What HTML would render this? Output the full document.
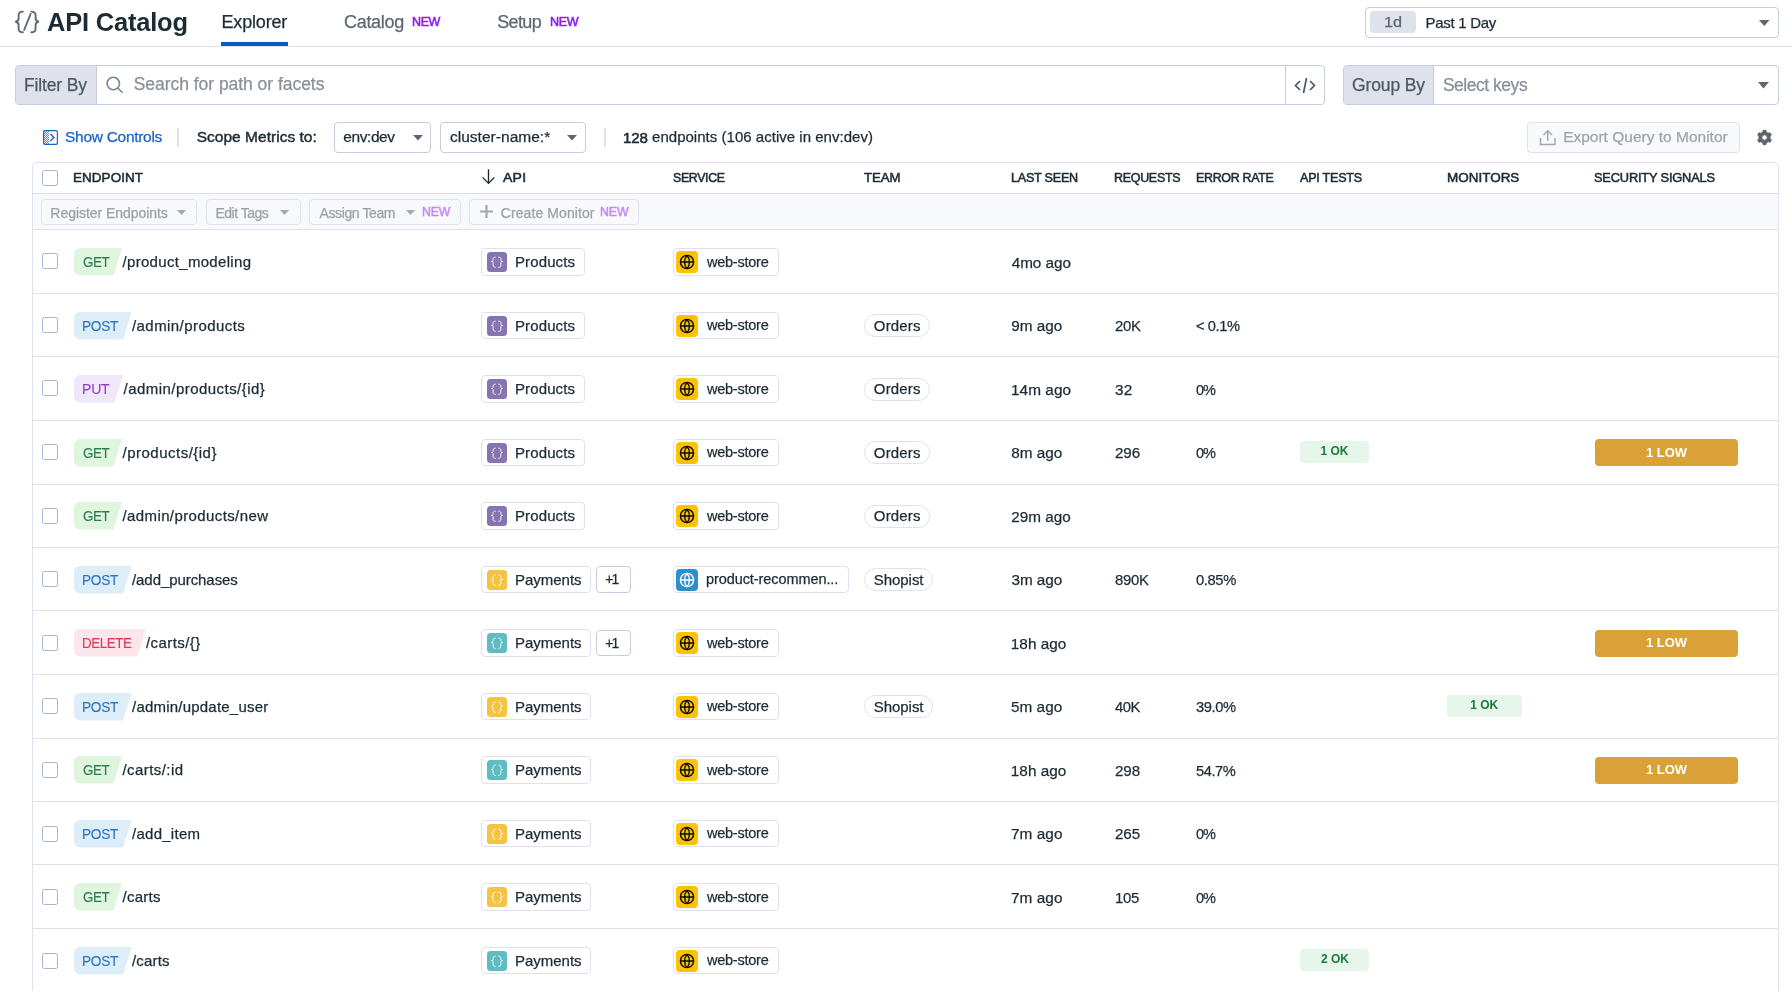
<!DOCTYPE html>
<html><head><meta charset="utf-8"><title>API Catalog</title>
<style>
html,body{margin:0;padding:0;background:#fff;width:1792px;height:991px;overflow:hidden}
body{position:relative;font-family:"Liberation Sans",sans-serif}
.t{position:absolute;line-height:0;white-space:nowrap;-webkit-text-stroke-width:0.25px}
.b{position:absolute;box-sizing:border-box}
svg.b{overflow:visible}
</style></head><body><div style="position:absolute;left:0;top:0;width:1792px;height:991px;will-change:transform;background:#fff">
<svg class="b" style="left:14.00px;top:10.00px" width="26" height="24" viewBox="0 0 26 24"><g fill="none" stroke="#5e6a74" stroke-width="1.9" stroke-linecap="round"><path d="M8.9 1.6 C5.6 1.6 4.6 2.6 4.6 5.3 V8.6 C4.6 10.6 3.6 11.6 1.2 11.8 C3.6 12 4.6 13 4.6 15 V18.4 C4.6 21.1 5.6 22.2 8.9 22.2"/><path d="M17.3 1.6 C20.6 1.6 21.6 2.6 21.6 5.3 V8.6 C21.6 10.6 22.6 11.6 25 11.8 C22.6 12 21.6 13 21.6 15 V18.4 C21.6 21.1 20.6 22.2 17.3 22.2"/><path d="M16.6 4 L10.2 19.8"/></g></svg>
<div class="t" style="left:46.77px;top:22.19px;font-size:26.00px;color:#1c2b34;font-weight:700;-webkit-text-stroke-width:0;letter-spacing:-0.201px;transform:scaleX(0.9794);transform-origin:0 0">API Catalog</div>
<div class="t" style="left:221.52px;top:22.36px;font-size:18.00px;color:#1c2b34;letter-spacing:-0.179px">Explorer</div>
<div class="b" style="left:221.00px;top:42.00px;width:67.00px;height:4.00px;background:#0a5bc4"></div>
<div class="t" style="left:344.09px;top:22.36px;font-size:18.00px;color:#5d6771;letter-spacing:-0.328px">Catalog</div>
<div class="t" style="left:412.18px;top:21.80px;font-size:13.00px;color:#8a1df5;letter-spacing:-0.399px;transform:scaleX(0.9606);transform-origin:0 0;-webkit-text-stroke:0.6px #8a1df5">NEW</div>
<div class="t" style="left:497.18px;top:22.36px;font-size:18.00px;color:#5d6771;letter-spacing:-0.616px">Setup</div>
<div class="t" style="left:550.17px;top:21.80px;font-size:13.00px;color:#8a1df5;letter-spacing:-0.335px;transform:scaleX(0.9668);transform-origin:0 0;-webkit-text-stroke:0.6px #8a1df5">NEW</div>
<div class="b" style="left:0.00px;top:46.00px;width:1792.00px;height:1.00px;background:#dfe2ec"></div>
<div class="b" style="left:1365.00px;top:7.00px;width:414.00px;height:31.00px;background:#fff;border:1px solid #c6cbdd;border-radius:4px;box-sizing:border-box"></div>
<div class="b" style="left:1370.00px;top:11.00px;width:46.00px;height:22.00px;background:#dfe2ec;border-radius:4px"></div>
<div class="t" style="left:1384.46px;top:21.80px;font-size:15.30px;color:#5a6470;transform:scaleX(1.0628);transform-origin:0 0">1d</div>
<div class="t" style="left:1425.47px;top:22.70px;font-size:15.00px;color:#1c2b34;letter-spacing:-0.290px">Past 1 Day</div>
<svg class="b" style="left:1759.05px;top:20.00px" width="10.5" height="6" viewBox="0 0 10.5 6"><path d="M0 0H10.5 L5.25 6Z" fill="#5f666d"/></svg>
<div class="b" style="left:15.00px;top:65.00px;width:1310.00px;height:40.00px;background:#fff;border:1px solid #c6cbdd;border-radius:4px;box-sizing:border-box"></div>
<div class="b" style="left:16.00px;top:66.00px;width:80.00px;height:38.00px;background:#dfe2ec;border-radius:3px 0 0 3px"></div>
<div class="b" style="left:96.00px;top:66.00px;width:1.00px;height:38.00px;background:#c6cbdd"></div>
<div class="t" style="left:23.96px;top:84.94px;font-size:17.50px;color:#4d5864;letter-spacing:-0.138px">Filter By</div>
<svg class="b" style="left:106.00px;top:76.00px" width="18" height="18" viewBox="0 0 18 18"><g fill="none" stroke="#7c858d" stroke-width="1.6"><circle cx="7.3" cy="7.5" r="6.2"/><path d="M11.8 12 L16.6 16.8"/></g></svg>
<div class="t" style="left:133.71px;top:84.44px;font-size:17.50px;color:#899098;letter-spacing:-0.038px">Search for path or facets</div>
<div class="b" style="left:1285.00px;top:66.00px;width:1.00px;height:38.00px;background:#c6cbdd"></div>
<svg class="b" style="left:1294.00px;top:77.00px" width="22" height="17" viewBox="0 0 22 17"><g fill="none" stroke="#4d5864" stroke-width="1.7"><path d="M6 4 L1.5 8.5 L6 13"/><path d="M16 4 L20.5 8.5 L16 13"/><path d="M12.5 1 L9.5 16"/></g></svg>
<div class="b" style="left:1343.00px;top:65.00px;width:436.00px;height:40.00px;background:#fff;border:1px solid #c6cbdd;border-radius:4px;box-sizing:border-box"></div>
<div class="b" style="left:1344.00px;top:66.00px;width:89.00px;height:38.00px;background:#dfe2ec;border-radius:3px 0 0 3px"></div>
<div class="b" style="left:1433.00px;top:66.00px;width:1.00px;height:38.00px;background:#c6cbdd"></div>
<div class="t" style="left:1352.12px;top:84.94px;font-size:17.50px;color:#4d5864;letter-spacing:-0.144px">Group By</div>
<div class="t" style="left:1442.91px;top:85.04px;font-size:17.50px;color:#899098;letter-spacing:-0.476px">Select keys</div>
<svg class="b" style="left:1758.20px;top:82.20px" width="11" height="6.5" viewBox="0 0 11 6.5"><path d="M0 0H11 L5.5 6.5Z" fill="#5f666d"/></svg>
<svg class="b" style="left:43.00px;top:130.00px" width="15" height="15" viewBox="0 0 15 15"><g fill="#1a63c6" opacity="0.75"><rect x="1" y="1" width="1" height="1"/><rect x="3" y="1" width="1" height="1"/><rect x="5" y="1" width="1" height="1"/><rect x="2" y="2" width="1" height="1"/><rect x="4" y="2" width="1" height="1"/><rect x="1" y="3" width="1" height="1"/><rect x="3" y="3" width="1" height="1"/><rect x="5" y="3" width="1" height="1"/><rect x="2" y="4" width="1" height="1"/><rect x="4" y="4" width="1" height="1"/><rect x="1" y="5" width="1" height="1"/><rect x="3" y="5" width="1" height="1"/><rect x="5" y="5" width="1" height="1"/><rect x="2" y="6" width="1" height="1"/><rect x="4" y="6" width="1" height="1"/><rect x="1" y="7" width="1" height="1"/><rect x="3" y="7" width="1" height="1"/><rect x="5" y="7" width="1" height="1"/><rect x="2" y="8" width="1" height="1"/><rect x="4" y="8" width="1" height="1"/><rect x="1" y="9" width="1" height="1"/><rect x="3" y="9" width="1" height="1"/><rect x="5" y="9" width="1" height="1"/><rect x="2" y="10" width="1" height="1"/><rect x="4" y="10" width="1" height="1"/><rect x="1" y="11" width="1" height="1"/><rect x="3" y="11" width="1" height="1"/><rect x="5" y="11" width="1" height="1"/><rect x="2" y="12" width="1" height="1"/><rect x="4" y="12" width="1" height="1"/><rect x="1" y="13" width="1" height="1"/><rect x="3" y="13" width="1" height="1"/><rect x="5" y="13" width="1" height="1"/></g><rect x="0.6" y="0.6" width="13.8" height="13.8" rx="1.3" fill="none" stroke="#1a63c6" stroke-width="1.2"/><path d="M7.7 4.3 L10.9 7.5 L7.7 10.7" fill="none" stroke="#1a63c6" stroke-width="1.4" stroke-linecap="round"/></svg>
<div class="t" style="left:65.00px;top:137.03px;font-size:15.50px;color:#1a63c6;letter-spacing:-0.286px">Show Controls</div>
<div class="b" style="left:177.00px;top:128.00px;width:2.00px;height:19.00px;background:#dfe2ec"></div>
<div class="t" style="left:196.70px;top:136.93px;font-size:15.50px;color:#1c2b34;letter-spacing:0.024px;-webkit-text-stroke:0.45px #1c2b34">Scope Metrics to:</div>
<div class="b" style="left:334.00px;top:122.00px;width:97.00px;height:31.00px;background:#fff;border:1px solid #c6cbdd;border-radius:4px;box-sizing:border-box"></div>
<div class="t" style="left:343.34px;top:136.63px;font-size:15.50px;color:#1c2b34;letter-spacing:-0.429px">env:dev</div>
<svg class="b" style="left:413.00px;top:135.00px" width="10" height="5.5" viewBox="0 0 10 5.5"><path d="M0 0H10 L5 5.5Z" fill="#5f666d"/></svg>
<div class="b" style="left:440.00px;top:122.00px;width:146.00px;height:31.00px;background:#fff;border:1px solid #c6cbdd;border-radius:4px;box-sizing:border-box"></div>
<div class="t" style="left:449.94px;top:136.63px;font-size:15.50px;color:#1c2b34;letter-spacing:0.029px">cluster-name:*</div>
<svg class="b" style="left:567.00px;top:135.00px" width="10" height="5.5" viewBox="0 0 10 5.5"><path d="M0 0H10 L5 5.5Z" fill="#5f666d"/></svg>
<div class="b" style="left:604.00px;top:128.00px;width:2.00px;height:19.00px;background:#dfe2ec"></div>
<div class="t" style="left:623.15px;top:137.50px;font-size:15.30px;color:#1c2b34;letter-spacing:-0.151px;transform:scaleX(0.9874);transform-origin:0 0;-webkit-text-stroke-width:0.55px">128</div>
<div class="t" style="left:652.06px;top:137.40px;font-size:15.00px;color:#1c2b34;letter-spacing:0.023px">endpoints (106 active in env:dev)</div>
<div class="b" style="left:1527.00px;top:122.00px;width:213.00px;height:31.00px;background:#f8f9fb;border:1px solid #dfe2ec;border-radius:4px;box-sizing:border-box"></div>
<svg class="b" style="left:1539.00px;top:129.00px" width="18" height="17" viewBox="0 0 18 17"><g fill="none" stroke="#a3a9b0" stroke-width="1.5"><path d="M1.5 9 V15.5 H16 V9"/><path d="M8.75 12 V2 M4.5 6 L8.75 1.8 L13 6"/></g></svg>
<div class="t" style="left:1563.13px;top:137.13px;font-size:15.50px;color:#9ea4ab">Export Query to Monitor</div>
<svg class="b" style="left:1756.50px;top:130.20px" width="15" height="15" viewBox="0 0 15 15"><path fill="#5b636b" stroke="#5b636b" stroke-width="0.9" stroke-linejoin="round" fill-rule="evenodd" d="M5.71 2.19 L6.13 0.33 L8.87 0.33 L9.29 2.19 L11.20 3.30 L13.03 2.73 L14.39 5.10 L12.99 6.39 L12.99 8.61 L14.39 9.90 L13.03 12.27 L11.20 11.70 L9.29 12.81 L8.87 14.67 L6.13 14.67 L5.71 12.81 L3.80 11.70 L1.97 12.27 L0.61 9.90 L2.01 8.61 L2.01 6.39 L0.61 5.10 L1.97 2.73 L3.80 3.30Z M4.80 7.50 a2.70 2.70 0 1 0 5.40 0 a2.70 2.70 0 1 0 -5.40 0Z"/></svg>
<div class="b" style="left:32.00px;top:162.00px;width:1747.00px;height:938.00px;background:#fff;border:1px solid #dfe2ec;border-radius:5px 5px 0 0;box-sizing:border-box"></div>
<div class="b" style="left:33.00px;top:193.00px;width:1745.00px;height:1.00px;background:#dfe2ec"></div>
<div class="b" style="left:33.00px;top:194.00px;width:1745.00px;height:35.00px;background:#f8f9fb"></div>
<div class="b" style="left:33.00px;top:229.00px;width:1745.00px;height:1.00px;background:#dfe2ec"></div>
<div class="b" style="left:42.00px;top:170.00px;width:16.00px;height:16.00px;background:#fff;border:1px solid #a9b2cf;border-radius:2.5px;box-sizing:border-box;border-width:1.5px"></div>
<div class="t" style="left:73.29px;top:177.56px;font-size:13.40px;color:#1c2b34;letter-spacing:0.033px;transform:scaleX(1.0079);transform-origin:0 0;-webkit-text-stroke:0.55px #1c2b34">ENDPOINT</div>
<div class="t" style="left:503.47px;top:177.56px;font-size:13.40px;color:#1c2b34;letter-spacing:0.209px;transform:scaleX(1.0504);transform-origin:0 0;-webkit-text-stroke:0.55px #1c2b34">API</div>
<div class="t" style="left:672.74px;top:177.56px;font-size:13.40px;color:#1c2b34;letter-spacing:-0.350px;transform:scaleX(0.9218);transform-origin:0 0;-webkit-text-stroke:0.55px #1c2b34">SERVICE</div>
<div class="t" style="left:864.10px;top:177.56px;font-size:13.40px;color:#1c2b34;letter-spacing:-0.063px;transform:scaleX(0.9878);transform-origin:0 0;-webkit-text-stroke:0.55px #1c2b34">TEAM</div>
<div class="t" style="left:1011.27px;top:177.56px;font-size:13.40px;color:#1c2b34;letter-spacing:-0.245px;transform:scaleX(0.9400);transform-origin:0 0;-webkit-text-stroke:0.55px #1c2b34">LAST SEEN</div>
<div class="t" style="left:1114.38px;top:177.56px;font-size:13.40px;color:#1c2b34;letter-spacing:-0.322px;transform:scaleX(0.9320);transform-origin:0 0;-webkit-text-stroke:0.55px #1c2b34">REQUESTS</div>
<div class="t" style="left:1195.88px;top:177.56px;font-size:13.40px;color:#1c2b34;letter-spacing:-0.323px;transform:scaleX(0.9271);transform-origin:0 0;-webkit-text-stroke:0.55px #1c2b34">ERROR RATE</div>
<div class="t" style="left:1299.78px;top:177.56px;font-size:13.40px;color:#1c2b34;letter-spacing:-0.243px;transform:scaleX(0.9375);transform-origin:0 0;-webkit-text-stroke:0.55px #1c2b34">API TESTS</div>
<div class="t" style="left:1446.60px;top:177.56px;font-size:13.40px;color:#1c2b34;letter-spacing:0.017px;transform:scaleX(1.0040);transform-origin:0 0;-webkit-text-stroke:0.55px #1c2b34">MONITORS</div>
<div class="t" style="left:1594.22px;top:177.56px;font-size:13.40px;color:#1c2b34;letter-spacing:-0.170px;transform:scaleX(0.9556);transform-origin:0 0;-webkit-text-stroke:0.55px #1c2b34">SECURITY SIGNALS</div>
<svg class="b" style="left:481.00px;top:168.00px" width="15" height="18" viewBox="0 0 15 18"><g fill="none" stroke="#1c2b34" stroke-width="1.35"><path d="M7.5 1.2 V15.4 M1.6 9.4 L7.5 15.4 L13.4 9.4"/></g></svg>
<div class="b" style="left:41.00px;top:199.00px;width:156.00px;height:26.00px;background:#f8f9fb;border:1px solid #dfe2ec;border-radius:4px;box-sizing:border-box"></div>
<div class="t" style="left:50.35px;top:212.55px;font-size:14.00px;color:#9aa1a8;letter-spacing:-0.049px">Register Endpoints</div>
<svg class="b" style="left:176.50px;top:209.50px" width="9" height="5" viewBox="0 0 9 5"><path d="M0 0H9 L4.5 5Z" fill="#a3a9b0"/></svg>
<div class="b" style="left:206.00px;top:199.00px;width:95.00px;height:26.00px;background:#f8f9fb;border:1px solid #dfe2ec;border-radius:4px;box-sizing:border-box"></div>
<div class="t" style="left:215.55px;top:212.55px;font-size:14.00px;color:#9aa1a8;letter-spacing:-0.523px">Edit Tags</div>
<svg class="b" style="left:279.50px;top:209.50px" width="9" height="5" viewBox="0 0 9 5"><path d="M0 0H9 L4.5 5Z" fill="#a3a9b0"/></svg>
<div class="b" style="left:309.00px;top:199.00px;width:152.00px;height:26.00px;background:#f8f9fb;border:1px solid #dfe2ec;border-radius:4px;box-sizing:border-box"></div>
<div class="t" style="left:319.47px;top:212.55px;font-size:14.00px;color:#9aa1a8;letter-spacing:-0.385px">Assign Team</div>
<svg class="b" style="left:406.00px;top:209.50px" width="9" height="5" viewBox="0 0 9 5"><path d="M0 0H9 L4.5 5Z" fill="#a3a9b0"/></svg>
<div class="t" style="left:422.49px;top:211.97px;font-size:12.50px;color:#c58af7;letter-spacing:-0.182px;transform:scaleX(0.9809);transform-origin:0 0;-webkit-text-stroke:0.5px #c58af7">NEW</div>
<div class="b" style="left:469.00px;top:199.00px;width:170.00px;height:26.00px;background:#f8f9fb;border:1px solid #dfe2ec;border-radius:4px;box-sizing:border-box"></div>
<div class="t" style="left:500.79px;top:212.55px;font-size:14.00px;color:#9aa1a8;letter-spacing:0.089px">Create Monitor</div>
<div class="t" style="left:600.29px;top:211.97px;font-size:12.50px;color:#c58af7;letter-spacing:-0.120px;transform:scaleX(0.9873);transform-origin:0 0;-webkit-text-stroke:0.5px #c58af7">NEW</div>
<svg class="b" style="left:479.80px;top:205.00px" width="13" height="13" viewBox="0 0 13 13"><path d="M6.5 0 V13 M0 6.5 H13" stroke="#a3a9b0" stroke-width="2.2"/></svg>
<div class="b" style="left:42.00px;top:253.00px;width:16.00px;height:16.00px;background:#fff;border:1px solid #a9b2cf;border-radius:2.5px;box-sizing:border-box;border-width:1.5px"></div>
<svg class="b" style="left:74.00px;top:248.00px" width="48" height="27.5" viewBox="0 0 48 27.5"><path d="M6 0 H48 L39.5 27.5 H6 A6 6 0 0 1 0 21.5 V6 A6 6 0 0 1 6 0Z" fill="#dff5dd"/></svg>
<div class="t" style="left:82.62px;top:262.37px;font-size:14.80px;color:#2e7a4c;letter-spacing:-0.502px;transform:scaleX(0.9070);transform-origin:0 0;-webkit-text-stroke-width:0.1px">GET</div>
<div class="t" style="left:122.50px;top:262.30px;font-size:15.00px;color:#1c2b34;letter-spacing:0.316px">/product_modeling</div>
<div class="b" style="left:481.00px;top:248.20px;width:104.00px;height:27.50px;background:#fff;border:1px solid #dfe2ec;border-radius:4px;box-sizing:border-box"></div>
<svg class="b" style="left:487.00px;top:252.00px" width="20" height="20" viewBox="0 0 20 20"><rect width="20" height="20" rx="3.5" fill="#8674b0"/><g fill="none" stroke="#fff" stroke-width="1" stroke-linecap="round" opacity="0.92"><path d="M8.3 5.1 C6.5 5.4 6.1 6 6.1 7.4 V8.5 C6.1 9.1 5.4 9.5 4.3 9.5 C5.4 9.5 6.1 9.9 6.1 10.6 V13.1 C6.1 14.5 6.5 15.1 8.3 15.4"/><path d="M11.7 5.1 C13.5 5.4 13.9 6 13.9 7.4 V8.5 C13.9 9.1 14.6 9.5 15.7 9.5 C14.6 9.5 13.9 9.9 13.9 10.6 V13.1 C13.9 14.5 13.5 15.1 11.7 15.4"/></g></svg>
<div class="t" style="left:514.97px;top:262.30px;font-size:15.00px;color:#1c2b34;letter-spacing:0.125px">Products</div>
<div class="b" style="left:673.00px;top:248.00px;width:106.00px;height:27.50px;background:#fff;border:1px solid #dfe2ec;border-radius:4px;box-sizing:border-box"></div>
<svg class="b" style="left:676.00px;top:251.00px" width="22" height="22" viewBox="0 0 22 22"><rect width="22" height="22" rx="4" fill="#fdc300"/><g fill="none" stroke="#0a0a0a" stroke-width="1.4"><circle cx="11" cy="11" r="6.6"/><path d="M4.4 11 H17.6 M11 4.4 C7.8 7.5 7.8 14.5 11 17.6 M11 4.4 C14.2 7.5 14.2 14.5 11 17.6"/></g></svg>
<div class="t" style="left:706.92px;top:261.98px;font-size:14.50px;color:#1c2b34;letter-spacing:-0.230px">web-store</div>
<div class="t" style="left:1011.65px;top:262.50px;font-size:15.30px;color:#1c2b34;letter-spacing:-0.012px">4mo ago</div>
<div class="b" style="left:33.00px;top:293.00px;width:1745.00px;height:1.00px;background:#dfe2ec"></div>
<div class="b" style="left:42.00px;top:317.00px;width:16.00px;height:16.00px;background:#fff;border:1px solid #a9b2cf;border-radius:2.5px;box-sizing:border-box;border-width:1.5px"></div>
<svg class="b" style="left:74.00px;top:311.50px" width="57.6" height="27.5" viewBox="0 0 57.6 27.5"><path d="M6 0 H57.6 L49.1 27.5 H6 A6 6 0 0 1 0 21.5 V6 A6 6 0 0 1 6 0Z" fill="#ddeef9"/></svg>
<div class="t" style="left:82.18px;top:325.87px;font-size:14.80px;color:#2a74c2;letter-spacing:-0.346px;transform:scaleX(0.9256);transform-origin:0 0;-webkit-text-stroke-width:0.1px">POST</div>
<div class="t" style="left:132.00px;top:325.80px;font-size:15.00px;color:#1c2b34;letter-spacing:0.430px">/admin/products</div>
<div class="b" style="left:481.00px;top:311.70px;width:104.00px;height:27.50px;background:#fff;border:1px solid #dfe2ec;border-radius:4px;box-sizing:border-box"></div>
<svg class="b" style="left:487.00px;top:315.50px" width="20" height="20" viewBox="0 0 20 20"><rect width="20" height="20" rx="3.5" fill="#8674b0"/><g fill="none" stroke="#fff" stroke-width="1" stroke-linecap="round" opacity="0.92"><path d="M8.3 5.1 C6.5 5.4 6.1 6 6.1 7.4 V8.5 C6.1 9.1 5.4 9.5 4.3 9.5 C5.4 9.5 6.1 9.9 6.1 10.6 V13.1 C6.1 14.5 6.5 15.1 8.3 15.4"/><path d="M11.7 5.1 C13.5 5.4 13.9 6 13.9 7.4 V8.5 C13.9 9.1 14.6 9.5 15.7 9.5 C14.6 9.5 13.9 9.9 13.9 10.6 V13.1 C13.9 14.5 13.5 15.1 11.7 15.4"/></g></svg>
<div class="t" style="left:514.97px;top:325.80px;font-size:15.00px;color:#1c2b34;letter-spacing:0.125px">Products</div>
<div class="b" style="left:673.00px;top:311.50px;width:106.00px;height:27.50px;background:#fff;border:1px solid #dfe2ec;border-radius:4px;box-sizing:border-box"></div>
<svg class="b" style="left:676.00px;top:314.50px" width="22" height="22" viewBox="0 0 22 22"><rect width="22" height="22" rx="4" fill="#fdc300"/><g fill="none" stroke="#0a0a0a" stroke-width="1.4"><circle cx="11" cy="11" r="6.6"/><path d="M4.4 11 H17.6 M11 4.4 C7.8 7.5 7.8 14.5 11 17.6 M11 4.4 C14.2 7.5 14.2 14.5 11 17.6"/></g></svg>
<div class="t" style="left:706.92px;top:325.48px;font-size:14.50px;color:#1c2b34;letter-spacing:-0.230px">web-store</div>
<div class="b" style="left:864.00px;top:314.00px;width:66.00px;height:23.00px;background:#fff;border:1px solid #dfe2ec;border-radius:12px;box-sizing:border-box"></div>
<div class="t" style="left:873.79px;top:325.80px;font-size:15.00px;color:#1c2b34;letter-spacing:0.182px">Orders</div>
<div class="t" style="left:1011.28px;top:326.00px;font-size:15.30px;color:#1c2b34;letter-spacing:0.013px">9m ago</div>
<div class="t" style="left:1114.55px;top:326.00px;font-size:15.30px;color:#1c2b34;letter-spacing:-0.328px;transform:scaleX(0.9756);transform-origin:0 0">20K</div>
<div class="t" style="left:1196.28px;top:326.00px;font-size:15.30px;color:#1c2b34;letter-spacing:-0.413px;transform:scaleX(0.9577);transform-origin:0 0">&lt; 0.1%</div>
<div class="b" style="left:33.00px;top:356.00px;width:1745.00px;height:1.00px;background:#dfe2ec"></div>
<div class="b" style="left:42.00px;top:380.00px;width:16.00px;height:16.00px;background:#fff;border:1px solid #a9b2cf;border-radius:2.5px;box-sizing:border-box;border-width:1.5px"></div>
<svg class="b" style="left:74.00px;top:375.00px" width="49" height="27.5" viewBox="0 0 49 27.5"><path d="M6 0 H49 L40.5 27.5 H6 A6 6 0 0 1 0 21.5 V6 A6 6 0 0 1 6 0Z" fill="#f0e8fa"/></svg>
<div class="t" style="left:82.15px;top:389.37px;font-size:14.80px;color:#8d3fc9;letter-spacing:-0.243px;transform:scaleX(0.9506);transform-origin:0 0;-webkit-text-stroke-width:0.1px">PUT</div>
<div class="t" style="left:123.60px;top:389.30px;font-size:15.00px;color:#1c2b34;letter-spacing:0.452px">/admin/products/{id}</div>
<div class="b" style="left:481.00px;top:375.20px;width:104.00px;height:27.50px;background:#fff;border:1px solid #dfe2ec;border-radius:4px;box-sizing:border-box"></div>
<svg class="b" style="left:487.00px;top:379.00px" width="20" height="20" viewBox="0 0 20 20"><rect width="20" height="20" rx="3.5" fill="#8674b0"/><g fill="none" stroke="#fff" stroke-width="1" stroke-linecap="round" opacity="0.92"><path d="M8.3 5.1 C6.5 5.4 6.1 6 6.1 7.4 V8.5 C6.1 9.1 5.4 9.5 4.3 9.5 C5.4 9.5 6.1 9.9 6.1 10.6 V13.1 C6.1 14.5 6.5 15.1 8.3 15.4"/><path d="M11.7 5.1 C13.5 5.4 13.9 6 13.9 7.4 V8.5 C13.9 9.1 14.6 9.5 15.7 9.5 C14.6 9.5 13.9 9.9 13.9 10.6 V13.1 C13.9 14.5 13.5 15.1 11.7 15.4"/></g></svg>
<div class="t" style="left:514.97px;top:389.30px;font-size:15.00px;color:#1c2b34;letter-spacing:0.125px">Products</div>
<div class="b" style="left:673.00px;top:375.00px;width:106.00px;height:27.50px;background:#fff;border:1px solid #dfe2ec;border-radius:4px;box-sizing:border-box"></div>
<svg class="b" style="left:676.00px;top:378.00px" width="22" height="22" viewBox="0 0 22 22"><rect width="22" height="22" rx="4" fill="#fdc300"/><g fill="none" stroke="#0a0a0a" stroke-width="1.4"><circle cx="11" cy="11" r="6.6"/><path d="M4.4 11 H17.6 M11 4.4 C7.8 7.5 7.8 14.5 11 17.6 M11 4.4 C14.2 7.5 14.2 14.5 11 17.6"/></g></svg>
<div class="t" style="left:706.92px;top:388.98px;font-size:14.50px;color:#1c2b34;letter-spacing:-0.230px">web-store</div>
<div class="b" style="left:864.00px;top:377.50px;width:66.00px;height:23.00px;background:#fff;border:1px solid #dfe2ec;border-radius:12px;box-sizing:border-box"></div>
<div class="t" style="left:873.79px;top:389.30px;font-size:15.00px;color:#1c2b34;letter-spacing:0.182px">Orders</div>
<div class="t" style="left:1010.83px;top:389.50px;font-size:15.30px;color:#1c2b34;letter-spacing:0.047px;transform:scaleX(1.0049);transform-origin:0 0">14m ago</div>
<div class="t" style="left:1114.71px;top:389.50px;font-size:15.30px;color:#1c2b34;letter-spacing:0.116px;transform:scaleX(1.0075);transform-origin:0 0">32</div>
<div class="t" style="left:1196.43px;top:389.50px;font-size:15.30px;color:#1c2b34;letter-spacing:-1.144px;transform:scaleX(0.9483);transform-origin:0 0">0%</div>
<div class="b" style="left:33.00px;top:420.00px;width:1745.00px;height:1.00px;background:#dfe2ec"></div>
<div class="b" style="left:42.00px;top:444.00px;width:16.00px;height:16.00px;background:#fff;border:1px solid #a9b2cf;border-radius:2.5px;box-sizing:border-box;border-width:1.5px"></div>
<svg class="b" style="left:74.00px;top:438.50px" width="48" height="27.5" viewBox="0 0 48 27.5"><path d="M6 0 H48 L39.5 27.5 H6 A6 6 0 0 1 0 21.5 V6 A6 6 0 0 1 6 0Z" fill="#dff5dd"/></svg>
<div class="t" style="left:82.62px;top:452.87px;font-size:14.80px;color:#2e7a4c;letter-spacing:-0.502px;transform:scaleX(0.9070);transform-origin:0 0;-webkit-text-stroke-width:0.1px">GET</div>
<div class="t" style="left:122.50px;top:452.80px;font-size:15.00px;color:#1c2b34;letter-spacing:0.493px">/products/{id}</div>
<div class="b" style="left:481.00px;top:438.70px;width:104.00px;height:27.50px;background:#fff;border:1px solid #dfe2ec;border-radius:4px;box-sizing:border-box"></div>
<svg class="b" style="left:487.00px;top:442.50px" width="20" height="20" viewBox="0 0 20 20"><rect width="20" height="20" rx="3.5" fill="#8674b0"/><g fill="none" stroke="#fff" stroke-width="1" stroke-linecap="round" opacity="0.92"><path d="M8.3 5.1 C6.5 5.4 6.1 6 6.1 7.4 V8.5 C6.1 9.1 5.4 9.5 4.3 9.5 C5.4 9.5 6.1 9.9 6.1 10.6 V13.1 C6.1 14.5 6.5 15.1 8.3 15.4"/><path d="M11.7 5.1 C13.5 5.4 13.9 6 13.9 7.4 V8.5 C13.9 9.1 14.6 9.5 15.7 9.5 C14.6 9.5 13.9 9.9 13.9 10.6 V13.1 C13.9 14.5 13.5 15.1 11.7 15.4"/></g></svg>
<div class="t" style="left:514.97px;top:452.80px;font-size:15.00px;color:#1c2b34;letter-spacing:0.125px">Products</div>
<div class="b" style="left:673.00px;top:438.50px;width:106.00px;height:27.50px;background:#fff;border:1px solid #dfe2ec;border-radius:4px;box-sizing:border-box"></div>
<svg class="b" style="left:676.00px;top:441.50px" width="22" height="22" viewBox="0 0 22 22"><rect width="22" height="22" rx="4" fill="#fdc300"/><g fill="none" stroke="#0a0a0a" stroke-width="1.4"><circle cx="11" cy="11" r="6.6"/><path d="M4.4 11 H17.6 M11 4.4 C7.8 7.5 7.8 14.5 11 17.6 M11 4.4 C14.2 7.5 14.2 14.5 11 17.6"/></g></svg>
<div class="t" style="left:706.92px;top:452.48px;font-size:14.50px;color:#1c2b34;letter-spacing:-0.230px">web-store</div>
<div class="b" style="left:864.00px;top:441.00px;width:66.00px;height:23.00px;background:#fff;border:1px solid #dfe2ec;border-radius:12px;box-sizing:border-box"></div>
<div class="t" style="left:873.79px;top:452.80px;font-size:15.00px;color:#1c2b34;letter-spacing:0.182px">Orders</div>
<div class="t" style="left:1011.33px;top:453.00px;font-size:15.30px;color:#1c2b34">8m ago</div>
<div class="t" style="left:1114.54px;top:453.00px;font-size:15.30px;color:#1c2b34;letter-spacing:-0.097px;transform:scaleX(0.9920);transform-origin:0 0">296</div>
<div class="t" style="left:1196.43px;top:453.00px;font-size:15.30px;color:#1c2b34;letter-spacing:-1.144px;transform:scaleX(0.9483);transform-origin:0 0">0%</div>
<div class="b" style="left:1300.00px;top:441.00px;width:69.00px;height:22.00px;background:#e6f6ea;border-radius:4px"></div>
<div class="t" style="left:1320.54px;top:450.84px;font-size:12.00px;color:#1e7a3c;font-weight:700;-webkit-text-stroke-width:0">1 OK</div>
<div class="b" style="left:1595.00px;top:439.00px;width:143.00px;height:27.00px;background:#d9a137;border-radius:4px"></div>
<div class="t" style="left:1645.98px;top:452.50px;font-size:13.00px;color:#ffffff;font-weight:700;-webkit-text-stroke-width:0">1 LOW</div>
<div class="b" style="left:33.00px;top:484.00px;width:1745.00px;height:1.00px;background:#dfe2ec"></div>
<div class="b" style="left:42.00px;top:508.00px;width:16.00px;height:16.00px;background:#fff;border:1px solid #a9b2cf;border-radius:2.5px;box-sizing:border-box;border-width:1.5px"></div>
<svg class="b" style="left:74.00px;top:502.00px" width="48" height="27.5" viewBox="0 0 48 27.5"><path d="M6 0 H48 L39.5 27.5 H6 A6 6 0 0 1 0 21.5 V6 A6 6 0 0 1 6 0Z" fill="#dff5dd"/></svg>
<div class="t" style="left:82.62px;top:516.37px;font-size:14.80px;color:#2e7a4c;letter-spacing:-0.502px;transform:scaleX(0.9070);transform-origin:0 0;-webkit-text-stroke-width:0.1px">GET</div>
<div class="t" style="left:122.50px;top:516.30px;font-size:15.00px;color:#1c2b34;letter-spacing:0.392px">/admin/products/new</div>
<div class="b" style="left:481.00px;top:502.20px;width:104.00px;height:27.50px;background:#fff;border:1px solid #dfe2ec;border-radius:4px;box-sizing:border-box"></div>
<svg class="b" style="left:487.00px;top:506.00px" width="20" height="20" viewBox="0 0 20 20"><rect width="20" height="20" rx="3.5" fill="#8674b0"/><g fill="none" stroke="#fff" stroke-width="1" stroke-linecap="round" opacity="0.92"><path d="M8.3 5.1 C6.5 5.4 6.1 6 6.1 7.4 V8.5 C6.1 9.1 5.4 9.5 4.3 9.5 C5.4 9.5 6.1 9.9 6.1 10.6 V13.1 C6.1 14.5 6.5 15.1 8.3 15.4"/><path d="M11.7 5.1 C13.5 5.4 13.9 6 13.9 7.4 V8.5 C13.9 9.1 14.6 9.5 15.7 9.5 C14.6 9.5 13.9 9.9 13.9 10.6 V13.1 C13.9 14.5 13.5 15.1 11.7 15.4"/></g></svg>
<div class="t" style="left:514.97px;top:516.30px;font-size:15.00px;color:#1c2b34;letter-spacing:0.125px">Products</div>
<div class="b" style="left:673.00px;top:502.00px;width:106.00px;height:27.50px;background:#fff;border:1px solid #dfe2ec;border-radius:4px;box-sizing:border-box"></div>
<svg class="b" style="left:676.00px;top:505.00px" width="22" height="22" viewBox="0 0 22 22"><rect width="22" height="22" rx="4" fill="#fdc300"/><g fill="none" stroke="#0a0a0a" stroke-width="1.4"><circle cx="11" cy="11" r="6.6"/><path d="M4.4 11 H17.6 M11 4.4 C7.8 7.5 7.8 14.5 11 17.6 M11 4.4 C14.2 7.5 14.2 14.5 11 17.6"/></g></svg>
<div class="t" style="left:706.92px;top:515.98px;font-size:14.50px;color:#1c2b34;letter-spacing:-0.230px">web-store</div>
<div class="b" style="left:864.00px;top:504.50px;width:66.00px;height:23.00px;background:#fff;border:1px solid #dfe2ec;border-radius:12px;box-sizing:border-box"></div>
<div class="t" style="left:873.79px;top:516.30px;font-size:15.00px;color:#1c2b34;letter-spacing:0.182px">Orders</div>
<div class="t" style="left:1011.23px;top:516.50px;font-size:15.30px;color:#1c2b34;letter-spacing:0.014px">29m ago</div>
<div class="b" style="left:33.00px;top:547.00px;width:1745.00px;height:1.00px;background:#dfe2ec"></div>
<div class="b" style="left:42.00px;top:571.00px;width:16.00px;height:16.00px;background:#fff;border:1px solid #a9b2cf;border-radius:2.5px;box-sizing:border-box;border-width:1.5px"></div>
<svg class="b" style="left:74.00px;top:565.50px" width="57.6" height="27.5" viewBox="0 0 57.6 27.5"><path d="M6 0 H57.6 L49.1 27.5 H6 A6 6 0 0 1 0 21.5 V6 A6 6 0 0 1 6 0Z" fill="#ddeef9"/></svg>
<div class="t" style="left:82.18px;top:579.87px;font-size:14.80px;color:#2a74c2;letter-spacing:-0.346px;transform:scaleX(0.9256);transform-origin:0 0;-webkit-text-stroke-width:0.1px">POST</div>
<div class="t" style="left:132.00px;top:579.80px;font-size:15.00px;color:#1c2b34;letter-spacing:-0.069px">/add_purchases</div>
<div class="b" style="left:481.00px;top:565.70px;width:110.40px;height:27.50px;background:#fff;border:1px solid #dfe2ec;border-radius:4px;box-sizing:border-box"></div>
<svg class="b" style="left:487.00px;top:569.50px" width="20" height="20" viewBox="0 0 20 20"><rect width="20" height="20" rx="3.5" fill="#f5c342"/><g fill="none" stroke="#fff" stroke-width="1" stroke-linecap="round" opacity="0.92"><path d="M8.3 5.1 C6.5 5.4 6.1 6 6.1 7.4 V8.5 C6.1 9.1 5.4 9.5 4.3 9.5 C5.4 9.5 6.1 9.9 6.1 10.6 V13.1 C6.1 14.5 6.5 15.1 8.3 15.4"/><path d="M11.7 5.1 C13.5 5.4 13.9 6 13.9 7.4 V8.5 C13.9 9.1 14.6 9.5 15.7 9.5 C14.6 9.5 13.9 9.9 13.9 10.6 V13.1 C13.9 14.5 13.5 15.1 11.7 15.4"/></g></svg>
<div class="t" style="left:514.97px;top:579.80px;font-size:15.00px;color:#1c2b34;letter-spacing:-0.017px">Payments</div>
<div class="b" style="left:596.00px;top:566.10px;width:35.00px;height:26.70px;background:#fff;border:1px solid #c6cbdd;border-radius:4px;box-sizing:border-box"></div>
<div class="t" style="left:605.32px;top:579.15px;font-size:14.00px;color:#1c2b34;letter-spacing:-2.095px">+1</div>
<div class="b" style="left:673.00px;top:565.50px;width:176.00px;height:27.50px;background:#fff;border:1px solid #dfe2ec;border-radius:4px;box-sizing:border-box"></div>
<svg class="b" style="left:676.00px;top:568.50px" width="22" height="22" viewBox="0 0 22 22"><rect width="22" height="22" rx="4" fill="#2e8fcd"/><g fill="none" stroke="#ffffff" stroke-width="1.4"><circle cx="11" cy="11" r="6.6"/><path d="M4.4 11 H17.6 M11 4.4 C7.8 7.5 7.8 14.5 11 17.6 M11 4.4 C14.2 7.5 14.2 14.5 11 17.6"/></g></svg>
<div class="t" style="left:705.97px;top:579.48px;font-size:14.50px;color:#1c2b34;letter-spacing:-0.078px">product-recommen...</div>
<div class="b" style="left:864.00px;top:568.00px;width:69.00px;height:23.00px;background:#fff;border:1px solid #dfe2ec;border-radius:12px;box-sizing:border-box"></div>
<div class="t" style="left:873.82px;top:579.80px;font-size:15.00px;color:#1c2b34;letter-spacing:-0.057px">Shopist</div>
<div class="t" style="left:1011.42px;top:580.00px;font-size:15.30px;color:#1c2b34;letter-spacing:-0.011px">3m ago</div>
<div class="t" style="left:1114.65px;top:580.00px;font-size:15.30px;color:#1c2b34;letter-spacing:-0.307px;transform:scaleX(0.9743);transform-origin:0 0">890K</div>
<div class="t" style="left:1196.42px;top:580.00px;font-size:15.30px;color:#1c2b34;letter-spacing:-0.394px;transform:scaleX(0.9640);transform-origin:0 0">0.85%</div>
<div class="b" style="left:33.00px;top:610.00px;width:1745.00px;height:1.00px;background:#dfe2ec"></div>
<div class="b" style="left:42.00px;top:635.00px;width:16.00px;height:16.00px;background:#fff;border:1px solid #a9b2cf;border-radius:2.5px;box-sizing:border-box;border-width:1.5px"></div>
<svg class="b" style="left:74.00px;top:629.00px" width="72" height="27.5" viewBox="0 0 72 27.5"><path d="M6 0 H72 L63.5 27.5 H6 A6 6 0 0 1 0 21.5 V6 A6 6 0 0 1 6 0Z" fill="#fde6eb"/></svg>
<div class="t" style="left:82.41px;top:643.37px;font-size:14.80px;color:#d83a5a;letter-spacing:-0.412px;transform:scaleX(0.9001);transform-origin:0 0;-webkit-text-stroke-width:0.1px">DELETE</div>
<div class="t" style="left:146.00px;top:643.30px;font-size:15.00px;color:#1c2b34;letter-spacing:0.426px">/carts/{}</div>
<div class="b" style="left:481.00px;top:629.20px;width:110.40px;height:27.50px;background:#fff;border:1px solid #dfe2ec;border-radius:4px;box-sizing:border-box"></div>
<svg class="b" style="left:487.00px;top:633.00px" width="20" height="20" viewBox="0 0 20 20"><rect width="20" height="20" rx="3.5" fill="#5fbcc2"/><g fill="none" stroke="#fff" stroke-width="1" stroke-linecap="round" opacity="0.92"><path d="M8.3 5.1 C6.5 5.4 6.1 6 6.1 7.4 V8.5 C6.1 9.1 5.4 9.5 4.3 9.5 C5.4 9.5 6.1 9.9 6.1 10.6 V13.1 C6.1 14.5 6.5 15.1 8.3 15.4"/><path d="M11.7 5.1 C13.5 5.4 13.9 6 13.9 7.4 V8.5 C13.9 9.1 14.6 9.5 15.7 9.5 C14.6 9.5 13.9 9.9 13.9 10.6 V13.1 C13.9 14.5 13.5 15.1 11.7 15.4"/></g></svg>
<div class="t" style="left:514.97px;top:643.30px;font-size:15.00px;color:#1c2b34;letter-spacing:-0.017px">Payments</div>
<div class="b" style="left:596.00px;top:629.60px;width:35.00px;height:26.70px;background:#fff;border:1px solid #c6cbdd;border-radius:4px;box-sizing:border-box"></div>
<div class="t" style="left:605.32px;top:642.65px;font-size:14.00px;color:#1c2b34;letter-spacing:-2.095px">+1</div>
<div class="b" style="left:673.00px;top:629.00px;width:106.00px;height:27.50px;background:#fff;border:1px solid #dfe2ec;border-radius:4px;box-sizing:border-box"></div>
<svg class="b" style="left:676.00px;top:632.00px" width="22" height="22" viewBox="0 0 22 22"><rect width="22" height="22" rx="4" fill="#fdc300"/><g fill="none" stroke="#0a0a0a" stroke-width="1.4"><circle cx="11" cy="11" r="6.6"/><path d="M4.4 11 H17.6 M11 4.4 C7.8 7.5 7.8 14.5 11 17.6 M11 4.4 C14.2 7.5 14.2 14.5 11 17.6"/></g></svg>
<div class="t" style="left:706.92px;top:642.98px;font-size:14.50px;color:#1c2b34;letter-spacing:-0.230px">web-store</div>
<div class="t" style="left:1010.83px;top:643.50px;font-size:15.30px;color:#1c2b34;letter-spacing:0.017px">18h ago</div>
<div class="b" style="left:1595.00px;top:629.50px;width:143.00px;height:27.00px;background:#d9a137;border-radius:4px"></div>
<div class="t" style="left:1645.98px;top:643.00px;font-size:13.00px;color:#ffffff;font-weight:700;-webkit-text-stroke-width:0">1 LOW</div>
<div class="b" style="left:33.00px;top:674.00px;width:1745.00px;height:1.00px;background:#dfe2ec"></div>
<div class="b" style="left:42.00px;top:698.00px;width:16.00px;height:16.00px;background:#fff;border:1px solid #a9b2cf;border-radius:2.5px;box-sizing:border-box;border-width:1.5px"></div>
<svg class="b" style="left:74.00px;top:692.50px" width="57.6" height="27.5" viewBox="0 0 57.6 27.5"><path d="M6 0 H57.6 L49.1 27.5 H6 A6 6 0 0 1 0 21.5 V6 A6 6 0 0 1 6 0Z" fill="#ddeef9"/></svg>
<div class="t" style="left:82.18px;top:706.87px;font-size:14.80px;color:#2a74c2;letter-spacing:-0.346px;transform:scaleX(0.9256);transform-origin:0 0;-webkit-text-stroke-width:0.1px">POST</div>
<div class="t" style="left:132.00px;top:706.80px;font-size:15.00px;color:#1c2b34;letter-spacing:0.215px">/admin/update_user</div>
<div class="b" style="left:481.00px;top:692.70px;width:110.40px;height:27.50px;background:#fff;border:1px solid #dfe2ec;border-radius:4px;box-sizing:border-box"></div>
<svg class="b" style="left:487.00px;top:696.50px" width="20" height="20" viewBox="0 0 20 20"><rect width="20" height="20" rx="3.5" fill="#f5c342"/><g fill="none" stroke="#fff" stroke-width="1" stroke-linecap="round" opacity="0.92"><path d="M8.3 5.1 C6.5 5.4 6.1 6 6.1 7.4 V8.5 C6.1 9.1 5.4 9.5 4.3 9.5 C5.4 9.5 6.1 9.9 6.1 10.6 V13.1 C6.1 14.5 6.5 15.1 8.3 15.4"/><path d="M11.7 5.1 C13.5 5.4 13.9 6 13.9 7.4 V8.5 C13.9 9.1 14.6 9.5 15.7 9.5 C14.6 9.5 13.9 9.9 13.9 10.6 V13.1 C13.9 14.5 13.5 15.1 11.7 15.4"/></g></svg>
<div class="t" style="left:514.97px;top:706.80px;font-size:15.00px;color:#1c2b34;letter-spacing:-0.017px">Payments</div>
<div class="b" style="left:673.00px;top:692.50px;width:106.00px;height:27.50px;background:#fff;border:1px solid #dfe2ec;border-radius:4px;box-sizing:border-box"></div>
<svg class="b" style="left:676.00px;top:695.50px" width="22" height="22" viewBox="0 0 22 22"><rect width="22" height="22" rx="4" fill="#fdc300"/><g fill="none" stroke="#0a0a0a" stroke-width="1.4"><circle cx="11" cy="11" r="6.6"/><path d="M4.4 11 H17.6 M11 4.4 C7.8 7.5 7.8 14.5 11 17.6 M11 4.4 C14.2 7.5 14.2 14.5 11 17.6"/></g></svg>
<div class="t" style="left:706.92px;top:706.48px;font-size:14.50px;color:#1c2b34;letter-spacing:-0.230px">web-store</div>
<div class="b" style="left:864.00px;top:695.00px;width:69.00px;height:23.00px;background:#fff;border:1px solid #dfe2ec;border-radius:12px;box-sizing:border-box"></div>
<div class="t" style="left:873.82px;top:706.80px;font-size:15.00px;color:#1c2b34;letter-spacing:-0.057px">Shopist</div>
<div class="t" style="left:1011.39px;top:707.00px;font-size:15.30px;color:#1c2b34;letter-spacing:0.022px;transform:scaleX(1.0022);transform-origin:0 0">5m ago</div>
<div class="t" style="left:1114.96px;top:707.00px;font-size:15.30px;color:#1c2b34;letter-spacing:-0.466px;transform:scaleX(0.9663);transform-origin:0 0">40K</div>
<div class="t" style="left:1196.44px;top:707.00px;font-size:15.30px;color:#1c2b34;letter-spacing:-0.423px;transform:scaleX(0.9615);transform-origin:0 0">39.0%</div>
<div class="b" style="left:1447.00px;top:695.00px;width:75.00px;height:22.00px;background:#e6f6ea;border-radius:4px"></div>
<div class="t" style="left:1470.24px;top:704.84px;font-size:12.00px;color:#1e7a3c;font-weight:700;-webkit-text-stroke-width:0">1 OK</div>
<div class="b" style="left:33.00px;top:738.00px;width:1745.00px;height:1.00px;background:#dfe2ec"></div>
<div class="b" style="left:42.00px;top:762.00px;width:16.00px;height:16.00px;background:#fff;border:1px solid #a9b2cf;border-radius:2.5px;box-sizing:border-box;border-width:1.5px"></div>
<svg class="b" style="left:74.00px;top:756.00px" width="48" height="27.5" viewBox="0 0 48 27.5"><path d="M6 0 H48 L39.5 27.5 H6 A6 6 0 0 1 0 21.5 V6 A6 6 0 0 1 6 0Z" fill="#dff5dd"/></svg>
<div class="t" style="left:82.62px;top:770.37px;font-size:14.80px;color:#2e7a4c;letter-spacing:-0.502px;transform:scaleX(0.9070);transform-origin:0 0;-webkit-text-stroke-width:0.1px">GET</div>
<div class="t" style="left:122.50px;top:770.30px;font-size:15.00px;color:#1c2b34;letter-spacing:0.421px">/carts/:id</div>
<div class="b" style="left:481.00px;top:756.20px;width:110.40px;height:27.50px;background:#fff;border:1px solid #dfe2ec;border-radius:4px;box-sizing:border-box"></div>
<svg class="b" style="left:487.00px;top:760.00px" width="20" height="20" viewBox="0 0 20 20"><rect width="20" height="20" rx="3.5" fill="#5fbcc2"/><g fill="none" stroke="#fff" stroke-width="1" stroke-linecap="round" opacity="0.92"><path d="M8.3 5.1 C6.5 5.4 6.1 6 6.1 7.4 V8.5 C6.1 9.1 5.4 9.5 4.3 9.5 C5.4 9.5 6.1 9.9 6.1 10.6 V13.1 C6.1 14.5 6.5 15.1 8.3 15.4"/><path d="M11.7 5.1 C13.5 5.4 13.9 6 13.9 7.4 V8.5 C13.9 9.1 14.6 9.5 15.7 9.5 C14.6 9.5 13.9 9.9 13.9 10.6 V13.1 C13.9 14.5 13.5 15.1 11.7 15.4"/></g></svg>
<div class="t" style="left:514.97px;top:770.30px;font-size:15.00px;color:#1c2b34;letter-spacing:-0.017px">Payments</div>
<div class="b" style="left:673.00px;top:756.00px;width:106.00px;height:27.50px;background:#fff;border:1px solid #dfe2ec;border-radius:4px;box-sizing:border-box"></div>
<svg class="b" style="left:676.00px;top:759.00px" width="22" height="22" viewBox="0 0 22 22"><rect width="22" height="22" rx="4" fill="#fdc300"/><g fill="none" stroke="#0a0a0a" stroke-width="1.4"><circle cx="11" cy="11" r="6.6"/><path d="M4.4 11 H17.6 M11 4.4 C7.8 7.5 7.8 14.5 11 17.6 M11 4.4 C14.2 7.5 14.2 14.5 11 17.6"/></g></svg>
<div class="t" style="left:706.92px;top:769.98px;font-size:14.50px;color:#1c2b34;letter-spacing:-0.230px">web-store</div>
<div class="t" style="left:1010.83px;top:770.50px;font-size:15.30px;color:#1c2b34;letter-spacing:0.017px">18h ago</div>
<div class="t" style="left:1114.54px;top:770.50px;font-size:15.30px;color:#1c2b34;letter-spacing:-0.099px;transform:scaleX(0.9918);transform-origin:0 0">298</div>
<div class="t" style="left:1196.41px;top:770.50px;font-size:15.30px;color:#1c2b34;letter-spacing:-0.446px;transform:scaleX(0.9594);transform-origin:0 0">54.7%</div>
<div class="b" style="left:1595.00px;top:756.50px;width:143.00px;height:27.00px;background:#d9a137;border-radius:4px"></div>
<div class="t" style="left:1645.98px;top:770.00px;font-size:13.00px;color:#ffffff;font-weight:700;-webkit-text-stroke-width:0">1 LOW</div>
<div class="b" style="left:33.00px;top:801.00px;width:1745.00px;height:1.00px;background:#dfe2ec"></div>
<div class="b" style="left:42.00px;top:826.00px;width:16.00px;height:16.00px;background:#fff;border:1px solid #a9b2cf;border-radius:2.5px;box-sizing:border-box;border-width:1.5px"></div>
<svg class="b" style="left:74.00px;top:819.50px" width="57.6" height="27.5" viewBox="0 0 57.6 27.5"><path d="M6 0 H57.6 L49.1 27.5 H6 A6 6 0 0 1 0 21.5 V6 A6 6 0 0 1 6 0Z" fill="#ddeef9"/></svg>
<div class="t" style="left:82.18px;top:833.87px;font-size:14.80px;color:#2a74c2;letter-spacing:-0.346px;transform:scaleX(0.9256);transform-origin:0 0;-webkit-text-stroke-width:0.1px">POST</div>
<div class="t" style="left:132.00px;top:833.80px;font-size:15.00px;color:#1c2b34;letter-spacing:0.264px">/add_item</div>
<div class="b" style="left:481.00px;top:819.70px;width:110.40px;height:27.50px;background:#fff;border:1px solid #dfe2ec;border-radius:4px;box-sizing:border-box"></div>
<svg class="b" style="left:487.00px;top:823.50px" width="20" height="20" viewBox="0 0 20 20"><rect width="20" height="20" rx="3.5" fill="#f5c342"/><g fill="none" stroke="#fff" stroke-width="1" stroke-linecap="round" opacity="0.92"><path d="M8.3 5.1 C6.5 5.4 6.1 6 6.1 7.4 V8.5 C6.1 9.1 5.4 9.5 4.3 9.5 C5.4 9.5 6.1 9.9 6.1 10.6 V13.1 C6.1 14.5 6.5 15.1 8.3 15.4"/><path d="M11.7 5.1 C13.5 5.4 13.9 6 13.9 7.4 V8.5 C13.9 9.1 14.6 9.5 15.7 9.5 C14.6 9.5 13.9 9.9 13.9 10.6 V13.1 C13.9 14.5 13.5 15.1 11.7 15.4"/></g></svg>
<div class="t" style="left:514.97px;top:833.80px;font-size:15.00px;color:#1c2b34;letter-spacing:-0.017px">Payments</div>
<div class="b" style="left:673.00px;top:819.50px;width:106.00px;height:27.50px;background:#fff;border:1px solid #dfe2ec;border-radius:4px;box-sizing:border-box"></div>
<svg class="b" style="left:676.00px;top:822.50px" width="22" height="22" viewBox="0 0 22 22"><rect width="22" height="22" rx="4" fill="#fdc300"/><g fill="none" stroke="#0a0a0a" stroke-width="1.4"><circle cx="11" cy="11" r="6.6"/><path d="M4.4 11 H17.6 M11 4.4 C7.8 7.5 7.8 14.5 11 17.6 M11 4.4 C14.2 7.5 14.2 14.5 11 17.6"/></g></svg>
<div class="t" style="left:706.92px;top:833.48px;font-size:14.50px;color:#1c2b34;letter-spacing:-0.230px">web-store</div>
<div class="t" style="left:1011.21px;top:834.00px;font-size:15.30px;color:#1c2b34;letter-spacing:0.039px;transform:scaleX(1.0040);transform-origin:0 0">7m ago</div>
<div class="t" style="left:1114.54px;top:834.00px;font-size:15.30px;color:#1c2b34;letter-spacing:-0.105px;transform:scaleX(0.9914);transform-origin:0 0">265</div>
<div class="t" style="left:1196.43px;top:834.00px;font-size:15.30px;color:#1c2b34;letter-spacing:-1.144px;transform:scaleX(0.9483);transform-origin:0 0">0%</div>
<div class="b" style="left:33.00px;top:864.00px;width:1745.00px;height:1.00px;background:#dfe2ec"></div>
<div class="b" style="left:42.00px;top:889.00px;width:16.00px;height:16.00px;background:#fff;border:1px solid #a9b2cf;border-radius:2.5px;box-sizing:border-box;border-width:1.5px"></div>
<svg class="b" style="left:74.00px;top:883.00px" width="48" height="27.5" viewBox="0 0 48 27.5"><path d="M6 0 H48 L39.5 27.5 H6 A6 6 0 0 1 0 21.5 V6 A6 6 0 0 1 6 0Z" fill="#dff5dd"/></svg>
<div class="t" style="left:82.62px;top:897.37px;font-size:14.80px;color:#2e7a4c;letter-spacing:-0.502px;transform:scaleX(0.9070);transform-origin:0 0;-webkit-text-stroke-width:0.1px">GET</div>
<div class="t" style="left:122.50px;top:897.30px;font-size:15.00px;color:#1c2b34;letter-spacing:0.274px">/carts</div>
<div class="b" style="left:481.00px;top:883.20px;width:110.40px;height:27.50px;background:#fff;border:1px solid #dfe2ec;border-radius:4px;box-sizing:border-box"></div>
<svg class="b" style="left:487.00px;top:887.00px" width="20" height="20" viewBox="0 0 20 20"><rect width="20" height="20" rx="3.5" fill="#f5c342"/><g fill="none" stroke="#fff" stroke-width="1" stroke-linecap="round" opacity="0.92"><path d="M8.3 5.1 C6.5 5.4 6.1 6 6.1 7.4 V8.5 C6.1 9.1 5.4 9.5 4.3 9.5 C5.4 9.5 6.1 9.9 6.1 10.6 V13.1 C6.1 14.5 6.5 15.1 8.3 15.4"/><path d="M11.7 5.1 C13.5 5.4 13.9 6 13.9 7.4 V8.5 C13.9 9.1 14.6 9.5 15.7 9.5 C14.6 9.5 13.9 9.9 13.9 10.6 V13.1 C13.9 14.5 13.5 15.1 11.7 15.4"/></g></svg>
<div class="t" style="left:514.97px;top:897.30px;font-size:15.00px;color:#1c2b34;letter-spacing:-0.017px">Payments</div>
<div class="b" style="left:673.00px;top:883.00px;width:106.00px;height:27.50px;background:#fff;border:1px solid #dfe2ec;border-radius:4px;box-sizing:border-box"></div>
<svg class="b" style="left:676.00px;top:886.00px" width="22" height="22" viewBox="0 0 22 22"><rect width="22" height="22" rx="4" fill="#fdc300"/><g fill="none" stroke="#0a0a0a" stroke-width="1.4"><circle cx="11" cy="11" r="6.6"/><path d="M4.4 11 H17.6 M11 4.4 C7.8 7.5 7.8 14.5 11 17.6 M11 4.4 C14.2 7.5 14.2 14.5 11 17.6"/></g></svg>
<div class="t" style="left:706.92px;top:896.98px;font-size:14.50px;color:#1c2b34;letter-spacing:-0.230px">web-store</div>
<div class="t" style="left:1011.21px;top:897.50px;font-size:15.30px;color:#1c2b34;letter-spacing:0.039px;transform:scaleX(1.0040);transform-origin:0 0">7m ago</div>
<div class="t" style="left:1115.36px;top:897.50px;font-size:15.30px;color:#1c2b34;letter-spacing:-0.313px;transform:scaleX(0.9743);transform-origin:0 0">105</div>
<div class="t" style="left:1196.43px;top:897.50px;font-size:15.30px;color:#1c2b34;letter-spacing:-1.144px;transform:scaleX(0.9483);transform-origin:0 0">0%</div>
<div class="b" style="left:33.00px;top:928.00px;width:1745.00px;height:1.00px;background:#dfe2ec"></div>
<div class="b" style="left:42.00px;top:953.00px;width:16.00px;height:16.00px;background:#fff;border:1px solid #a9b2cf;border-radius:2.5px;box-sizing:border-box;border-width:1.5px"></div>
<svg class="b" style="left:74.00px;top:946.50px" width="57.6" height="27.5" viewBox="0 0 57.6 27.5"><path d="M6 0 H57.6 L49.1 27.5 H6 A6 6 0 0 1 0 21.5 V6 A6 6 0 0 1 6 0Z" fill="#ddeef9"/></svg>
<div class="t" style="left:82.18px;top:960.87px;font-size:14.80px;color:#2a74c2;letter-spacing:-0.346px;transform:scaleX(0.9256);transform-origin:0 0;-webkit-text-stroke-width:0.1px">POST</div>
<div class="t" style="left:132.00px;top:960.80px;font-size:15.00px;color:#1c2b34;letter-spacing:0.174px">/carts</div>
<div class="b" style="left:481.00px;top:946.70px;width:110.40px;height:27.50px;background:#fff;border:1px solid #dfe2ec;border-radius:4px;box-sizing:border-box"></div>
<svg class="b" style="left:487.00px;top:950.50px" width="20" height="20" viewBox="0 0 20 20"><rect width="20" height="20" rx="3.5" fill="#5fbcc2"/><g fill="none" stroke="#fff" stroke-width="1" stroke-linecap="round" opacity="0.92"><path d="M8.3 5.1 C6.5 5.4 6.1 6 6.1 7.4 V8.5 C6.1 9.1 5.4 9.5 4.3 9.5 C5.4 9.5 6.1 9.9 6.1 10.6 V13.1 C6.1 14.5 6.5 15.1 8.3 15.4"/><path d="M11.7 5.1 C13.5 5.4 13.9 6 13.9 7.4 V8.5 C13.9 9.1 14.6 9.5 15.7 9.5 C14.6 9.5 13.9 9.9 13.9 10.6 V13.1 C13.9 14.5 13.5 15.1 11.7 15.4"/></g></svg>
<div class="t" style="left:514.97px;top:960.80px;font-size:15.00px;color:#1c2b34;letter-spacing:-0.017px">Payments</div>
<div class="b" style="left:673.00px;top:946.50px;width:106.00px;height:27.50px;background:#fff;border:1px solid #dfe2ec;border-radius:4px;box-sizing:border-box"></div>
<svg class="b" style="left:676.00px;top:949.50px" width="22" height="22" viewBox="0 0 22 22"><rect width="22" height="22" rx="4" fill="#fdc300"/><g fill="none" stroke="#0a0a0a" stroke-width="1.4"><circle cx="11" cy="11" r="6.6"/><path d="M4.4 11 H17.6 M11 4.4 C7.8 7.5 7.8 14.5 11 17.6 M11 4.4 C14.2 7.5 14.2 14.5 11 17.6"/></g></svg>
<div class="t" style="left:706.92px;top:960.48px;font-size:14.50px;color:#1c2b34;letter-spacing:-0.230px">web-store</div>
<div class="b" style="left:1300.00px;top:949.00px;width:69.00px;height:22.00px;background:#e6f6ea;border-radius:4px"></div>
<div class="t" style="left:1320.88px;top:958.84px;font-size:12.00px;color:#1e7a3c;font-weight:700;-webkit-text-stroke-width:0">2 OK</div>
</div></body></html>
